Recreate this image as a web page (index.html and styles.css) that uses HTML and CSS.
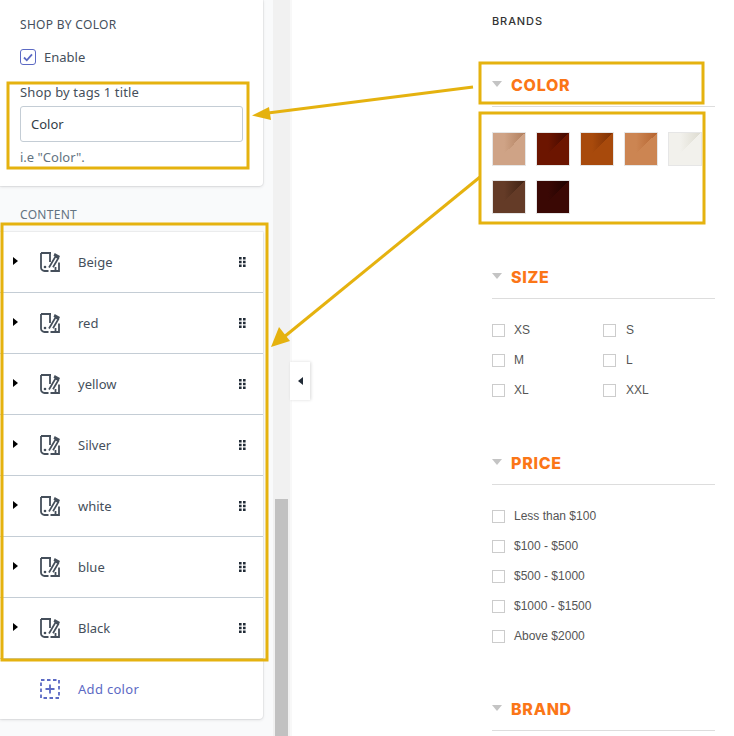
FILE: index.html

```html
<!DOCTYPE html>
<html lang="en">
<head>
  <meta charset="UTF-8" />
  <meta name="viewport" content="width=device-width, initial-scale=1.0"/>
  <title>Shop by color</title>
  <link rel="stylesheet" href="styles.css">
</head>
<body>
<svg class="defs" width="0" height="0">
  <symbol id="swatch" viewBox="0 0 20 20">
    <path d="M1 1h10M1 1v14.500a3.500 3.500 0 0 0 3.500 3.500h4M10 1v9" fill="none" stroke="currentColor" stroke-width="1.800"/>
    <circle cx="5" cy="15" r="1.300" fill="currentColor"/>
    <path d="M9 15.500 15.500 4.500l2.800 1.800-5.300 9" fill="none" stroke="currentColor" stroke-width="1.700"/>
    <path d="M14.700 1l-1.200 2.800 5.200 2.900 1.300-2.700z" fill="currentColor"/>
    <path d="M19 10.500V19h-8.500M15.500 15v4" fill="none" stroke="currentColor" stroke-width="1.800"/>
  </symbol>
  <symbol id="grip" viewBox="0 0 7 10">
    <path d="M0 0h2.600v2.500H0zM4 0h2.600v2.500H4zM0 3.700h2.600v2.500H0zM4 3.700h2.600v2.500H4zM0 7.400h2.600v2.500H0zM4 7.400h2.600v2.500H4z" fill="currentColor"/>
  </symbol>
</svg>

<div class="page">
  <aside class="sidebar">
    <section class="card settings">
      <h3 class="card-title">SHOP BY COLOR</h3>
      <label class="enable">
        <span class="tick">
          <svg width="10" height="9" viewBox="0 0 10 9"><path d="M1 4.500l2.800 2.800L9 1.300" fill="none" stroke="#5c6ac4" stroke-width="1.800"/></svg>
        </span>
        Enable
      </label>
      <div class="field-label">Shop by tags 1 title</div>
      <div class="text-input">Color</div>
      <div class="hint">i.e "Color".</div>
    </section>

    <h3 class="section-label">CONTENT</h3>

    <section class="card list">
      <div class="row"><span class="caret"></span><svg class="row-icon"><use href="#swatch"/></svg><span class="row-name">Beige</span><svg class="grip"><use href="#grip"/></svg></div>
      <div class="row"><span class="caret"></span><svg class="row-icon"><use href="#swatch"/></svg><span class="row-name">red</span><svg class="grip"><use href="#grip"/></svg></div>
      <div class="row"><span class="caret"></span><svg class="row-icon"><use href="#swatch"/></svg><span class="row-name">yellow</span><svg class="grip"><use href="#grip"/></svg></div>
      <div class="row"><span class="caret"></span><svg class="row-icon"><use href="#swatch"/></svg><span class="row-name">Silver</span><svg class="grip"><use href="#grip"/></svg></div>
      <div class="row"><span class="caret"></span><svg class="row-icon"><use href="#swatch"/></svg><span class="row-name">white</span><svg class="grip"><use href="#grip"/></svg></div>
      <div class="row"><span class="caret"></span><svg class="row-icon"><use href="#swatch"/></svg><span class="row-name">blue</span><svg class="grip"><use href="#grip"/></svg></div>
      <div class="row"><span class="caret"></span><svg class="row-icon"><use href="#swatch"/></svg><span class="row-name">Black</span><svg class="grip"><use href="#grip"/></svg></div>
      <div class="add-row">
        <svg class="add-icon" viewBox="0 0 20 20">
          <rect x="1" y="1" width="18" height="18" fill="none" stroke="#5c6ac4" stroke-width="1.800" stroke-dasharray="3.500 2.500"/>
          <path d="M10 5.500v9M5.500 10h9" stroke="#5c6ac4" stroke-width="1.800"/>
        </svg>
        <span class="add-name">Add color</span>
      </div>
    </section>
  </aside>

  <div class="scrollbar"><div class="thumb"></div></div>

  <main class="preview">
    <button class="collapse"><span class="collapse-arrow"></span></button>

    <div class="filters">
      <div class="brands-top">BRANDS</div>

      <div class="filter filter-color">
        <h4 class="filter-title">COLOR</h4>
        <div class="swatches">
          <span class="color c-beige"></span>
          <span class="color c-red"></span>
          <span class="color c-rust"></span>
          <span class="color c-tan"></span>
          <span class="color c-white"></span>
          <span class="color c-brown"></span>
          <span class="color c-dark"></span>
        </div>
      </div>

      <div class="filter filter-size">
        <h4 class="filter-title">SIZE</h4>
        <ul class="checks two-col">
          <li><span class="box"></span>XS</li>
          <li><span class="box"></span>S</li>
          <li><span class="box"></span>M</li>
          <li><span class="box"></span>L</li>
          <li><span class="box"></span>XL</li>
          <li><span class="box"></span>XXL</li>
        </ul>
      </div>

      <div class="filter filter-price">
        <h4 class="filter-title">PRICE</h4>
        <ul class="checks">
          <li><span class="box"></span>Less than $100</li>
          <li><span class="box"></span>$100 - $500</li>
          <li><span class="box"></span>$500 - $1000</li>
          <li><span class="box"></span>$1000 - $1500</li>
          <li><span class="box"></span>Above $2000</li>
        </ul>
      </div>

      <div class="filter">
        <h4 class="filter-title">BRAND</h4>
      </div>
    </div>
  </main>
</div>

<!-- annotations drawn over the screenshot -->
<svg class="notes" width="734" height="736" viewBox="0 0 734 736">
  <g fill="none" stroke="#e5b20f" stroke-width="3">
    <rect x="8" y="83" width="240" height="85"/>
    <rect x="2" y="224" width="265" height="436"/>
    <rect x="480" y="63" width="223" height="40"/>
    <rect x="480" y="113" width="224" height="110"/>
    <path d="M473 87 268 113"/>
    <path d="M480 177 284 337"/>
  </g>
  <path d="M252 115.500 269 107 271 120z" fill="#e5b20f"/>
  <path d="M271 347 279 327 290 341z" fill="#e5b20f"/>
</svg>
</body>
</html>
```

FILE: styles.css

```css
* {
  box-sizing: border-box;
}
html, body {
  margin: 0;
  height: 736px;
  overflow: hidden;
  background: white;
}
body {
  position: relative;
  font-family: "Noto Sans", sans-serif;
  color: #212b36;
}
.defs {
  position: absolute;
}
.page {
  display: flex;
  height: 736px;
}

/* left settings column */
.sidebar {
  width: 273px;
  flex: none;
  background: #f9fafb;
}
.card {
  width: 263px;
  background: white;
  border-radius: 0 0 4px 0;
  box-shadow: 0 0 0 1px rgba(63,63,68,0.05), 0 1px 3px rgba(63,63,68,0.15);
}
.settings {
  height: 186px;
  padding: 16px 20px 0;
}
.card-title {
  margin: 0;
  font-size: 12px;
  line-height: 17px;
  font-weight: 400;
  letter-spacing: 0.3px;
  color: #454f5b;
}
.enable {
  display: flex;
  align-items: center;
  gap: 8px;
  margin-top: 15px;
  font-size: 13px;
  line-height: 18px;
  color: #454f5b;
}
.tick {
  display: flex;
  align-items: center;
  justify-content: center;
  width: 16px;
  height: 16px;
  border: 1px solid #5c6ac4;
  border-radius: 3px;
}
.field-label {
  margin-top: 17px;
  font-size: 13px;
  line-height: 18px;
  letter-spacing: 0.15px;
  color: #454f5b;
}
.text-input {
  height: 36px;
  margin-top: 5px;
  padding: 0 10px;
  font-size: 13px;
  line-height: 34px;
  color: #333d47;
  border: 1px solid #c4cdd5;
  border-radius: 3px;
}
.hint {
  margin-top: 6px;
  font-size: 13px;
  line-height: 18px;
  color: #637381;
}
.section-label {
  margin: 0;
  padding: 20px 20px 9px;
  font-size: 12px;
  line-height: 17px;
  font-weight: 400;
  letter-spacing: 0.3px;
  color: #637381;
}
.list {
  height: 487px;
}
.row {
  display: flex;
  align-items: center;
  height: 61px;
  padding-left: 13px;
  border-bottom: 1px solid #c4cdd5;
}
.caret {
  width: 0;
  height: 0;
  margin-top: -2px;
  border-left: 5px solid black;
  border-top: 4.500px solid transparent;
  border-bottom: 4.500px solid transparent;
}
.row-icon {
  width: 20px;
  height: 20px;
  margin-left: 22px;
  color: #454f5b;
}
.row-name {
  margin-left: 18px;
  font-size: 13px;
  color: #454f5b;
  flex: 1;
}
.grip {
  width: 7px;
  height: 10px;
  margin-right: 17px;
  color: #212b36;
}
.add-row {
  display: flex;
  align-items: center;
  height: 60px;
  padding-left: 40px;
}
.add-icon {
  width: 20px;
  height: 20px;
}
.add-name {
  margin-left: 18px;
  font-size: 13px;
  letter-spacing: 0.3px;
  color: #5c6ac4;
}

/* scrollbar between the two panes */
.scrollbar {
  width: 17px;
  flex: none;
  padding: 499px 2px 0;
  background: #f1f1f1;
}
.thumb {
  height: 237px;
  background: #c1c1c1;
}

/* storefront preview */
.preview {
  position: relative;
  flex: 1;
  min-width: 0;
  padding-left: 200px;
  border-left: 2px solid #f8f8f8;
}
.collapse {
  position: absolute;
  left: -2px;
  top: 362px;
  width: 20px;
  height: 38px;
  padding: 0;
  border: 0;
  background: white;
  box-shadow: 1px 0 3px rgba(0,0,0,0.15);
}
.collapse-arrow {
  display: block;
  width: 0;
  height: 0;
  margin-left: 8px;
  border-right: 5px solid #212b36;
  border-top: 4.500px solid transparent;
  border-bottom: 4.500px solid transparent;
}
.filters {
  width: 223px;
}
.brands-top {
  padding-top: 14px;
  font-family: "Inter", sans-serif;
  font-size: 11px;
  line-height: 15px;
  font-weight: 500;
  letter-spacing: 0.9px;
  color: #333;
}
.filter-title {
  position: relative;
  margin: 0;
  padding-left: 19px;
  height: 36px;
  font-family: "Inter", sans-serif;
  font-size: 16px;
  line-height: 28px;
  font-weight: 800;
  letter-spacing: 0.7px;
  color: #fb7617;
  border-bottom: 1px solid #ddd;
}
.filter-title::before {
  content: "";
  position: absolute;
  left: 0;
  top: 10px;
  border-top: 6px solid #c4c4c4;
  border-left: 5px solid transparent;
  border-right: 5px solid transparent;
}
.filter-color {
  padding-top: 42px;
  height: 234px;
}
.swatches {
  display: flex;
  flex-wrap: wrap;
  gap: 14px 10px;
  width: 223px;
  padding-top: 25px;
}
.color {
  width: 34px;
  height: 34px;
  border: 1px solid #e6e6e6;
  background-image:
    linear-gradient(to bottom right, transparent 50%, var(--base) 50%),
    linear-gradient(to right, var(--base) 35%, var(--dark));
}
.c-beige { --base: #cfa386; --dark: #b07f5e; }
.c-red { --base: #6c1500; --dark: #400800; }
.c-rust { --base: #a84a0c; --dark: #7c2f04; }
.c-tan { --base: #cc8552; --dark: #b56430; }
.c-white { --base: #f2f1ec; --dark: #dddbd0; }
.c-brown { --base: #643b27; --dark: #3f2213; }
.c-dark { --base: #3a0804; --dark: #1d0200; }
.filter-size {
  height: 186px;
}
.filter-price {
  height: 246px;
}
.checks {
  list-style: none;
  margin: 0;
  padding: 16px 0 0;
  font-family: "Liberation Sans", sans-serif;
  font-size: 12px;
  color: #555;
}
.checks li {
  display: flex;
  align-items: center;
  height: 30px;
}
.two-col {
  display: grid;
  grid-template-columns: 111px 1fr;
}
.two-col li:nth-child(even) .box {
  margin-right: 10px;
}
.box {
  width: 13px;
  height: 13px;
  margin-right: 9px;
  border: 1px solid #ccc;
}

/* yellow callouts */
.notes {
  position: absolute;
  left: 0;
  top: 0;
}
```
